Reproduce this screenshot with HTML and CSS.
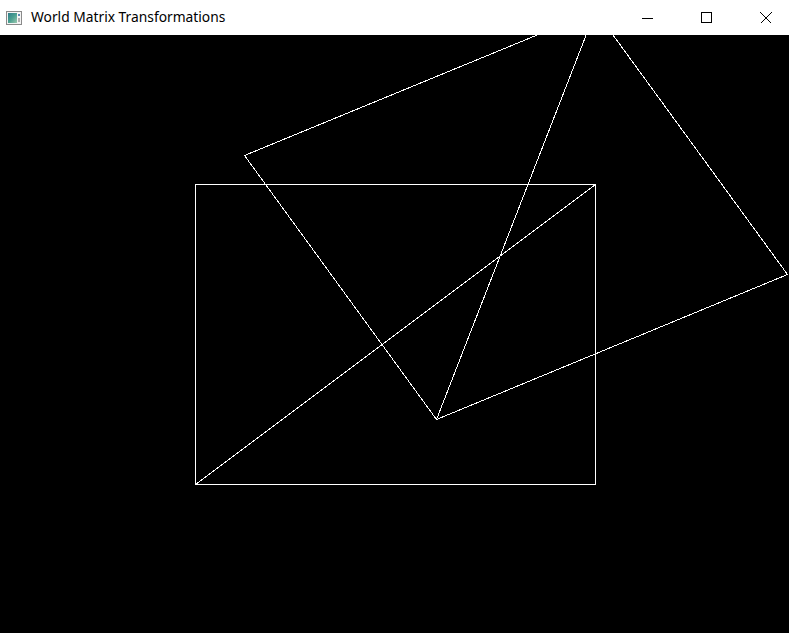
FILE: index.html
```html
<!DOCTYPE html>
<html>
<head>
<meta charset="utf-8">
<title>World Matrix Transformations</title>
<link rel="stylesheet" href="styles.css">
</head>
<body>
<div class="window">
  <header class="titlebar">
    <div class="title-left">
      <svg class="app-icon" width="16" height="16" viewBox="0 0 16 16">
        <defs>
          <linearGradient id="g" x1="0" y1="0" x2="1" y2="1">
            <stop offset="0" stop-color="#2f7d8a"/>
            <stop offset="0.5" stop-color="#4aa090"/>
            <stop offset="1" stop-color="#9cc9b0"/>
          </linearGradient>
        </defs>
        <rect x="0.5" y="1.5" width="15" height="13" fill="#f4f4f4" stroke="#8a8a8a"/>
        <rect x="2" y="3" width="9" height="10" fill="url(#g)"/>
        <rect x="12" y="4" width="2" height="2" fill="#5a8ab0"/>
        <rect x="12" y="8" width="2" height="4" fill="#b0b0b0"/>
      </svg>
      <span class="title-text">World Matrix Transformations</span>
    </div>
    <div class="controls">
      <div class="ctl">
        <svg width="12" height="12" viewBox="0 0 12 12"><path d="M0 6.5H11" stroke="#000" stroke-width="1"/></svg>
      </div>
      <div class="ctl">
        <svg width="12" height="12" viewBox="0 0 12 12"><rect x="0.5" y="0.5" width="10" height="10" fill="none" stroke="#000"/></svg>
      </div>
      <div class="ctl">
        <svg width="12" height="12" viewBox="0 0 12 12"><path d="M0.5 0.5L11.5 11.5M11.5 0.5L0.5 11.5" stroke="#000" stroke-width="1"/></svg>
      </div>
    </div>
  </header>
  <main class="client">
    <svg class="canvas" width="789" height="598" viewBox="0 0 789 598" shape-rendering="crispEdges">
      <g fill="none" stroke="#ffffff" stroke-width="1">
        <rect x="195.5" y="149.5" width="400" height="300"/>
        <line x1="195.5" y1="449.5" x2="595.5" y2="149.5"/>
        <polygon points="244.5,120.5 436.5,384.5 787.5,239.5 595.5,-24"/>
        <line x1="436.5" y1="384.5" x2="595.5" y2="-24"/>
      </g>
    </svg>
  </main>
</div>
</body>
</html>
```
FILE: styles.css
```css
html, body {
  margin: 0;
  padding: 0;
  background: #000;
  overflow: hidden;
}
.window {
  width: 789px;
  height: 633px;
  display: flex;
  flex-direction: column;
}
.titlebar {
  height: 35px;
  flex: 0 0 35px;
  background: #fff;
  display: flex;
  align-items: center;
  justify-content: space-between;
}
.title-left {
  display: flex;
  align-items: center;
  padding-left: 6px;
  gap: 9px;
}
.app-icon {
  display: block;
}
.title-text {
  font-family: "Noto Sans", "Open Sans", sans-serif;
  font-size: 13.8px;
  color: #000;
  position: relative;
  top: -1px;
}
.controls {
  display: flex;
  height: 100%;
  gap: 13px;
}
.ctl {
  width: 46px;
  height: 100%;
  display: flex;
  align-items: center;
  justify-content: center;
}
.ctl svg {
  display: block;
  shape-rendering: crispEdges;
}
.client {
  flex: 1;
  background: #000;
  overflow: hidden;
}
.canvas {
  display: block;
}
```
